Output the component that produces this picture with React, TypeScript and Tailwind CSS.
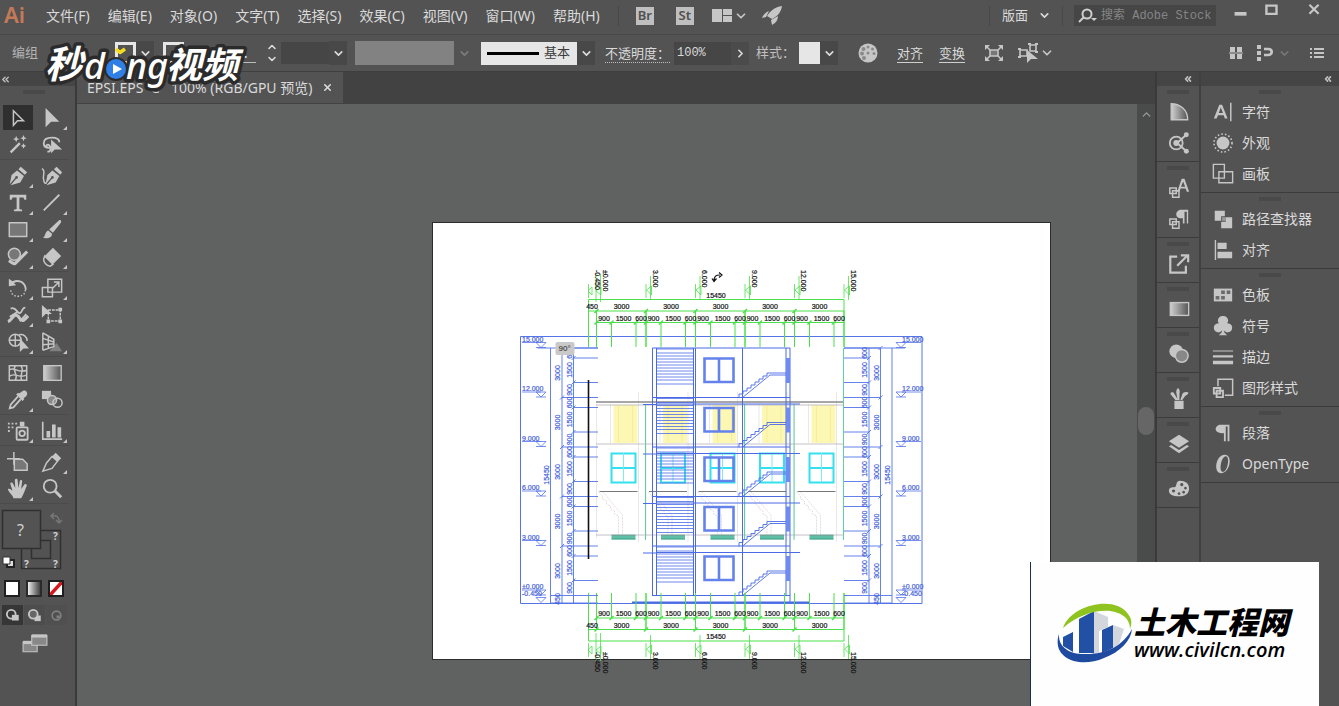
import { useState, type PropsWithChildren, type ReactNode } from "react";
import { ChevronDown, ChevronRight, ChevronUp, ChevronsLeft, X } from "lucide-react";

interface IconProps {
    size?: number,
}

const Icon = ({ size = 24, children }: PropsWithChildren<IconProps>) => (
    <svg width={size} height={size} viewBox="0 0 24 24" fill="currentColor" stroke="none" aria-hidden="true" className="shrink-0">
        {children}
    </svg>
);

const line = { fill: "none", stroke: "currentColor", strokeWidth: 1.6 } as const;

const menus = ["文件(F)", "编辑(E)", "对象(O)", "文字(T)", "选择(S)", "效果(C)", "视图(V)", "窗口(W)", "帮助(H)"];

interface Tool {
    name: string,
    icon: ReactNode,
    more?: boolean,
}

const toolGroups: Tool[][] = [
    [
        { name: "选择工具", icon: <path d="M7 4v16l4.500-5H18z" {...line} /> },
        { name: "直接选择工具", more: true, icon: <path d="M5 1v21l6-6h9z" /> },
        { name: "魔棒工具", icon: <><path d="M4 20L14 10" {...line} strokeWidth={2.6} /><path d="M10 2l1 2.500 2.500 1-2.500 1L10 9l-1-2.500-2.500-1 2.500-1zM18 1l1 2.500 2.500 1-2.500 1L18 8l-1-2.500-2.500-1 2.500-1zM18 10l1 2 2 1-2 1-1 2-1-2-2-1 2-1z" /></> },
        { name: "套索工具", icon: <><path d="M9 15c-4 0-6-2-6-5 0-4 4-6 9-6s8 2 8 5M7 19c3 1 4-2 3-5s-4-3-4-1 3 3 5 1" {...line} strokeWidth={2} /><path d="M11 6v15l4-4h8z" /></> },
    ],
    [
        { name: "钢笔工具", more: true, icon: <><path d="M15 2l7 6-2.500 2.500-7-6zM11 6l7.500 6-4 7L4 22l6-7a1.500 1.500 0 1 0-1-1L3 21l2-10z" /></> },
        { name: "曲率工具", icon: <><path d="M17 2l6 6-2 2.500-7-6zM12.500 6l7.500 6-4 7-10 3 6-7a1.500 1.500 0 1 0-1-1L5 21l2-10z" /><path d="M1 4c5 2 0 8 2 12 0 3 1 4 3 4" {...line} /></> },
        { name: "文字工具", more: true, icon: <path d="M3 3h18v5.500h-2L18 6h-4.500v12.500l3 .8V21h-9v-1.700l3-.8V6H6L5 8.500H3z" /> },
        { name: "直线段工具", more: true, icon: <path d="M3 20L20 3" {...line} strokeWidth={2} /> },
        { name: "矩形工具", more: true, icon: <path d="M2.500 4h19v15h-19z" {...line} fill="#777" /> },
        { name: "画笔工具", more: true, icon: <path d="M20 1c2.500 0 2.500 2 1 4l-8 10-4-3.500zM8 12.500l4 3.500c0 5-6 5.500-10 4.500 3-1 2-7 6-8z" /> },
        { name: "Shaper 工具", more: true, icon: <><circle cx="8" cy="9" r="6.500" {...line} fill="#777" /><path d="M2 16c4 2 4 4 7 3L22 6" {...line} strokeWidth={3.4} /></> },
        { name: "橡皮擦工具", more: true, icon: <><path d="M13 2l9 9-9 9-9-9z" /><path d="M4 11l9 9-3 2c-4 0-8-5-7-8z" {...line} /></> },
    ],
    [
        { name: "旋转工具", more: true, icon: <><path d="M2 2v8l8-1-2.500-2.500c6-3 12 1 12 7.500H21.500C21.500 6 14 1 6 4.500z" /><path d="M20 14c0 4-3 7-8 7s-8-3-8-8" {...line} strokeDasharray="1.600 2" /></> },
        { name: "比例缩放工具", more: true, icon: <><path d="M1.500 11.500h11v10h-11zM7.500 2.500h15v14h-15z" {...line} /><path d="M13 12l6-6m-5-.5h5.500V11" {...line} /></> },
        { name: "宽度工具", more: true, icon: <><path d="M1 19c4-1 5-6 8-7 5 0 4 6 8 6 2 0 4-3 6-5" {...line} strokeWidth={3.4} /><path d="M4 5c6-3 7 6 10 5s2-6 6-6M3 14l8-5M14 19l7-8" {...line} strokeWidth={2} /></> },
        { name: "自由变换工具", icon: <><path d="M8 6.500h13v12H8z" {...line} strokeDasharray="3 1" /><path d="M1 1v14l4-4h7zM19 4h4v4h-4zM19 17h4v4h-4zM6 17h4v4H6z" /></> },
        { name: "形状生成器工具", more: true, icon: <><circle cx="9" cy="10" r="6.500" {...line} /><path d="M13 4c5-1 9 2 9 7M2 10h13M9 4v13" {...line} /><path d="M14 8v15l4-4h6z" /></> },
        { name: "透视网格工具", more: true, icon: <><path d="M2 2v19M2 2l12 7v8L2 21M2 8l12 4M2 15l12-1M8 6v13" {...line} /><path d="M9 22l8-9 6 9z" opacity=".4" /></> },
    ],
    [
        { name: "网格工具", icon: <path d="M2.500 4h19v16h-19zM2 9c7-5 8 4 20 0M2 16c7-6 9 3 20-2M9 4c-4 7 4 8 0 16M15 4c5 5-2 8 1 16" {...line} /> },
        { name: "渐变工具", icon: <><rect x="3" y="4" width="19" height="16" fill="url(#fade)" stroke="currentColor" strokeWidth="1.500" /></> },
        { name: "吸管工具", more: true, icon: <><path d="M16 3c4-4 8 1 5 5l-3 2 1 1-2 2-7-7 2-2 1 1z" /><path d="M12 8L4 17l-1 4 4-1 8-9" {...line} strokeWidth={2} /></> },
        { name: "混合工具", icon: <><path d="M1 2h10v9H1z" /><circle cx="12" cy="12" r="5" {...line} fill="#888" /><circle cx="18" cy="15" r="5" {...line} /></> },
    ],
    [
        { name: "符号喷枪工具", more: true, icon: <><path d="M1 3h2v2H1zM5 3h2v2H5zM9 3h2v2H9zM1 7h2v2H1zM5 7h2v2H5zM1 11h2v2H1zM14 2h5v5h-5z" /><rect x="10.500" y="8" width="12" height="13.500" rx="1" {...line} strokeWidth={2} /><circle cx="16.500" cy="14.500" r="3" {...line} strokeWidth={2} /></> },
        { name: "柱形图工具", more: true, icon: <path d="M1 2h1.800v18H23v1.800H1zM6 12h4v7H6zM12 5h4v14h-4zM18 8h4v11h-4z" /> },
    ],
    [
        { name: "画板工具", icon: <><path d="M0 8.500h14M7.500 1v14" {...line} /><path d="M8 9h9l5 5v7H8z" {...line} fill="#777" /></> },
        { name: "切片工具", more: true, icon: <><path d="M12 6l6 5-6 8-10 3 4-9z" {...line} /><path d="M16 2l6 6-4 4-6-6z" /></> },
        { name: "抓手工具", more: true, icon: <path d="M7 22c-1-4-6-7-6-10 2-1 4 1 5 2L3.500 6c1-2 2.500-1 3 0l2.500 5-.5-9c1-2 3-1 3 0l1 9 1.500-8c1-1.500 3-.5 2.500 1L15.500 12 19 7c1.500-1 3 .2 2.500 1.500-2 5-3 9-6 13.500z" /> },
        { name: "缩放工具", icon: <><circle cx="10" cy="9" r="7" {...line} strokeWidth={2} /><path d="M15 14l7 7" {...line} strokeWidth={3.2} /></> },
    ],
];

interface Panel {
    name: string,
    icon: ReactNode,
}

const dockGroups: Panel[][] = [
    [
        { name: "颜色参考", icon: <path d="M3.500 3c9 0 18 6 18 17.500h-18z" fill="url(#fade)" stroke="currentColor" strokeWidth="1.500" /> },
        { name: "资源导出", icon: <><circle cx="9" cy="12" r="7" {...line} strokeWidth={2} /><path d="M10 12l10-9M10 12l10 9" {...line} strokeWidth={2} /><circle cx="9" cy="12" r="3.200" /><circle cx="20" cy="3" r="2.700" /><circle cx="20" cy="21" r="2.700" /></> },
    ],
    [
        { name: "字符样式", icon: <><path d="M10 16l5-14h3l5 14h-2.500l-1.200-3.500h-5.600L12.500 16zM14.200 10.500h4.500L16.500 5z" /><path d="M2 12h7v6H2zM5 15h7v7H5z" {...line} /></> },
        { name: "段落样式", icon: <><path d="M14 2h8v15h-1.500V4H18v13h-1.800v-6C11 12 9 9 9 7s2-5 5-5z" /><path d="M2 12h7v6H2zM5 15h7v7H5z" {...line} /></> },
    ],
    [{ name: "导出", icon: <><path d="M10 4H2.500v17.500h17V14" {...line} strokeWidth={2.4} /><path d="M10 14L21 3M14 2.500h8V10" {...line} strokeWidth={2.4} /></> }],
    [{ name: "渐变", icon: <rect x="2.500" y="5" width="20" height="14" fill="url(#fade)" stroke="currentColor" strokeWidth="1.500" /> }],
    [{ name: "透明度", icon: <><circle cx="9" cy="9" r="7.500" /><circle cx="15" cy="14" r="7" {...line} fill="#888" /></> }],
    [{ name: "画笔", icon: <path d="M7 14h10v9H7zM8 13L3 7c-1-2 1-3 3-2l5 8zM10.500 13L9 5c0-3 1-4 2-5 2 2 2 4 1.500 6v7zM13.500 13l2-6c1-3 5-3 7-2-1 3-3 3-4 4l-3 4z" /> }],
    [{ name: "图层", icon: <path d="M12 2l11 7-11 7L1 9zM3.500 13l8.500 5.500 8.500-5.500L23 14.500 12 22 1 14.500z" /> }],
    [{ name: "颜色", icon: <path fillRule="evenodd" d="M13 3c6 0 10 3 10 8.500S19 20 12 20 1 18 1 14s3-4 6-4 1-7 6-7zm2 2.500a1.700 1.700 0 1 0 .1 0zm4 4a1.500 1.500 0 1 0 .1 0zm-2 4.500a1.500 1.500 0 1 0 .1 0zm-5 1.500a1.500 1.500 0 1 0 .1 0zm-6-3a1.700 1.700 0 1 0 .1 0z" /> }],
];

const panelGroups: Panel[][] = [
    [
        { name: "字符", icon: <><path d="M2 19L8 4h3l6 15h-3l-1.200-3.500H6.500L5 19zM7.400 13h4.500L9.600 7z" /><path d="M20.500 2v20" {...line} /></> },
        { name: "外观", icon: <><circle cx="12" cy="12" r="7" /><circle cx="12" cy="12" r="9.800" {...line} strokeWidth={1.800} strokeDasharray="1.700 2.300" /></> },
        { name: "画板", icon: <path d="M1.500 1.500h12v15h-12zM7.500 9.500h15v12h-15z" fill="#535353" stroke="currentColor" strokeWidth="1.500" /> },
    ],
    [
        { name: "路径查找器", icon: <><path d="M3 3h11v6h-4v5H3zM15 10h7v12H10v-7h5z" /><path d="M11 10h4v4h-4z" opacity=".6" /></> },
        { name: "对齐", icon: <path d="M3 1h1.500v22H3zM6 4h10v7H6zM6 14h16v7H6z" /> },
    ],
    [
        { name: "色板", icon: <><path d="M2 5h20v14H2z" /><path d="M4 13h4v4H4zM10 13h4v4h-4zM10 7h4v4h-4zM16 7h4v4h-4z" fill="#6b6b6b" /></> },
        { name: "符号", icon: <path d="M12 1a5 5 0 0 1 4.500 8 5 5 0 1 1-3.500 8c0 2 1 3 3.500 5h-9c2.500-2 3.500-3 3.500-5A5 5 0 1 1 7.500 9 5 5 0 0 1 12 1z" /> },
        { name: "描边", icon: <path d="M1 5h22v1H1zM1 10h22v2.500H1zM1 16h22v4H1z" /> },
        { name: "图形样式", icon: <><path d="M14 20h8.500V2.500h-16V10" {...line} /><path d="M2 12h7v6H2zM5 15h7v7H5z" {...line} strokeWidth={2} /></> },
    ],
    [
        { name: "段落", icon: <path d="M9 3h10v18h-2V5h-2v16h-2v-9C7 13 4 10 4 8s2-5 5-5z" /> },
        { name: "OpenType", icon: <path fillRule="evenodd" d="M14 2c9 0 6 20-4 20C1 22 4 2 14 2zm1 1.500c-5 0-8 17-3 17s8-17 3-17z" /> },
    ],
];

const Grip = () => (
    <div className="flex h-[11px] items-center justify-center">
        <div className="h-[4px] w-[22px] bg-[#494949]" />
    </div>
);

const PanelBar = () => (
    <div className="flex h-[14px] items-center justify-end bg-[#454545] pr-[6px] text-[#bdbdbd]">
        <ChevronsLeft size={10} strokeWidth={4} />
    </div>
);

const Caret = ({ label, className = "w-[18px] bg-[#484848]" }: { label: string, className?: string }) => (
    <button type="button" aria-label={label} className={`${className} flex h-[24px] shrink-0 items-center justify-center text-[#dedede]`}>
        <ChevronDown size={13} strokeWidth={3} />
    </button>
);

const MenuBar = () => (
    <header className="flex h-[35px] items-center border-b border-[#484848] pb-[3px] text-[14px] whitespace-nowrap">
        <div className="w-[46px] shrink-0 pb-1 pl-1 text-[22px] leading-[30px] font-semibold text-[#c47a58]">Ai</div>
        <nav className="flex gap-[18px]">
            {menus.map((menu) => (
                <button key={menu} type="button">{menu}</button>
            ))}
        </nav>
        <div className="ml-[18px] h-5 w-px bg-[#484848]" />
        <button type="button" className="ml-[17px] flex h-[18px] w-[18px] items-center justify-center bg-[#bfbfbf] text-[13px] font-semibold text-[#505050]">Br</button>
        <button type="button" className="ml-[22px] flex h-[18px] w-[18px] items-center justify-center bg-[#bfbfbf] text-[13px] font-semibold text-[#505050]">St</button>
        <button type="button" aria-label="排列文档" className="ml-4 flex items-center text-[#c6c6c6]">
            <Icon><path d="M2 5h10v13H2zM13 5h9v6h-9zM13 12h9v6h-9z" /></Icon>
            <ChevronDown size={14} strokeWidth={3} />
        </button>
        <button type="button" aria-label="GPU 性能" className="ml-3 text-[#c6c6c6]">
            <Icon><path d="M22 2C15 3 10 7 7 12l5 3c6-3 9-7 10-13zM9 7c-3 1-6 4-7 7l4-1zM18 12c0 4-2 7-6 9l-1-5z" /></Icon>
        </button>
        <div className="ml-auto h-5 w-px bg-[#484848]" />
        <label className="ml-3 flex items-center">
            <select aria-label="工作区" className="w-[36px] appearance-none text-[13px]" defaultValue="版面">
                <option>版面</option>
            </select>
            <ChevronDown size={13} strokeWidth={3} />
        </label>
        <div className="mx-[11px] h-5 w-px bg-[#484848]" />
        <label className="flex h-[21px] w-[142px] items-center bg-[#464646] pl-1">
            <svg width="22" height="16" viewBox="0 0 22 16" fill="none" stroke="#cfcfcf" strokeWidth="2" aria-hidden="true">
                <circle cx="9" cy="6" r="4.500" />
                <path d="M6 9l-5 5" />
                <path d="M13 10h6l-3 3z" fill="#cfcfcf" stroke="none" />
            </svg>
            <input aria-label="搜索" placeholder="搜索 Adobe Stock" className="w-0 flex-1 pl-px font-['Liberation_Mono','Noto_Sans_CJK_SC',monospace] text-[12px] placeholder:text-[#858585]" />
        </label>
        <div className="flex h-[24px] items-center pb-2 text-[#c6c6c6]">
            <button type="button" aria-label="最小化" className="ml-[14px]"><Icon size={22}><path d="M5 12h13v4H5z" /></Icon></button>
            <button type="button" aria-label="最大化" className="ml-2"><Icon size={22}><path d="M7 5h11v9H7z" {...line} strokeWidth={2.6} /></Icon></button>
            <button type="button" aria-label="关闭" className="mr-[14px] ml-[21px]"><Icon size={22}><path d="M7 4l10 10M17 4L7 14" {...line} strokeWidth={2.4} /></Icon></button>
        </div>
    </header>
);

const ControlBar = () => (
    <div className="flex h-[37px] items-center border-b border-[#3f3f3f] text-[13px] whitespace-nowrap">
        <span className="ml-3 w-[103px] text-[#b4b4b4]">编组</span>
        <button type="button" aria-label="填色" className="h-[22px] w-[21px] border-[3px] border-[#e6e6e6]" />
        <Caret label="填色选项" />
        <button type="button" aria-label="描边颜色" className="ml-[9px] h-[22px] w-[21px] border-[3px] border-[#e6e6e6]" />
        <button type="button" aria-label="描边" className="ml-[58px] w-[14px] border-b border-[#bdbdbd]">：</button>
        <div className="ml-[6px] flex w-[19px] flex-col items-center text-[#e0e0e0]">
            <button type="button" aria-label="增加"><ChevronUp size={12} strokeWidth={3} /></button>
            <button type="button" aria-label="减少"><ChevronDown size={12} strokeWidth={3} /></button>
        </div>
        <input aria-label="描边粗细" className="h-[22px] w-[48px] bg-[#464646]" />
        <Caret label="粗细选项" />
        <input aria-label="变量宽度" className="ml-2 h-6 w-[99px] bg-[#828282]" />
        <Caret label="宽度选项" className="w-[20px] opacity-30" />
        <label className="ml-[7px] flex h-[23px] w-[96px] items-center bg-[#e6e6e6] pl-[6px] text-[#3c3c3c]">
            <span className="h-[3px] w-[52px] bg-black" />
            <select aria-label="画笔定义" className="ml-[5px] w-[32px] appearance-none" defaultValue="基本">
                <option>基本</option>
            </select>
        </label>
        <Caret label="画笔选项" />
        <label htmlFor="opacity" className="ml-[10px] w-[65px] border-b border-dotted border-[#bdbdbd] leading-[18px]">不透明度：</label>
        <input id="opacity" defaultValue="100%" className="ml-1 h-[23px] w-[57px] bg-[#464646] pl-[3px] font-['Liberation_Mono',monospace] text-[12px]" />
        <button type="button" aria-label="不透明度选项" className="flex h-[23px] w-[18px] items-center justify-center bg-[#4b4b4b]"><ChevronRight size={13} strokeWidth={3} /></button>
        <span className="ml-[7px] w-[39px] text-[#c0c0c0]">样式：</span>
        <button type="button" aria-label="样式" className="ml-[4px] h-[22px] w-[21px] bg-[#e6e6e6]" />
        <Caret label="样式选项" />
        <button type="button" aria-label="重新着色图稿" className="ml-[18px] text-[#c6c6c6]">
            <Icon>
                <circle cx="12" cy="12" r="9.500" />
                <g fill="#8a8a8a"><circle cx="12" cy="6" r="1.500" /><circle cx="16.500" cy="8" r="1.500" /><circle cx="18" cy="12.500" r="1.500" /><circle cx="7.500" cy="8" r="2" /><circle cx="6" cy="12.500" r="2" /><circle cx="8" cy="17" r="2" /><circle cx="12" cy="12" r="1.500" /></g>
            </Icon>
        </button>
        <button type="button" className="ml-[17px] border-b border-[#cfcfcf] leading-[18px]">对齐</button>
        <button type="button" className="ml-4 border-b border-[#cfcfcf] leading-[18px]">变换</button>
        <button type="button" aria-label="隔离选中的对象" className="ml-[17px] text-[#c6c6c6]">
            <Icon><path d="M8 9h8v6H8z" {...line} fill="#777" /><path d="M4 5l4 4M20 5l-4 4M4 19l4-4M20 19l-4-4" {...line} /><path d="M3 4h5L3 9zM21 4h-5l5 5zM3 20h5l-5-5zM21 20h-5l5-5z" /></Icon>
        </button>
        <button type="button" aria-label="选择类似的对象" className="ml-[10px] flex items-center text-[#c6c6c6]">
            <Icon><path d="M4 9h7v6H4zM14 4h6v6h-6z" {...line} /><path d="M11 9v13l4-4h7zM2 7h3v2H2zM2 15h3v2H2zM12 2h3v2h-3zM19 2h3v2h-3zM19 10h3v2h-3z" /></Icon>
            <ChevronDown size={14} strokeWidth={3} />
        </button>
        <div className="ml-auto flex items-center pr-[10px] text-[#c6c6c6]">
            <button type="button" aria-label="对齐像素网格"><Icon><path d="M6 6h5v5H6zM13 6h5v5h-5zM6 13h5v5H6zM13 13h5v5h-5zM5 11.500h14v1H5z" /></Icon></button>
            <button type="button" aria-label="对齐选项" className="ml-[6px] flex items-center">
                <Icon><path d="M3 4h4v4H3zM3 10h4v4H3zM3 16h4v4H3z" /><path d="M10 8h4c5 0 5 6 0 6h-4" {...line} strokeWidth={2.6} /></Icon>
                <ChevronDown size={13} strokeWidth={3} className="opacity-30" />
            </button>
            <button type="button" aria-label="面板菜单" className="ml-[14px]"><Icon><path d="M5 7h2v2H5zM9 7h10v2H9zM5 11h2v2H5zM9 11h10v2H9zM5 15h2v2H5zM9 15h10v2H9z" /></Icon></button>
        </div>
    </div>
);

const FillAndStroke = () => (
    <svg width="70" height="71" viewBox="0 504 70 71" fill="none" stroke="#303030" strokeWidth="1.500" className="font-['Noto_Sans',sans-serif]" aria-label="填色和描边">
        <path d="M21.500 530.500h39v38h-39zM31.500 540.500h19v18h-19z" />
        <path d="M2.500 510.500h38v38h-38z" fill="#535353" />
        <g fill="#cfcfcf" stroke="none">
            <text x="17" y="536" fontSize="16">?</text>
            <text x="53" y="540" fontSize="10" fontWeight="700">?</text>
            <text x="24" y="568" fontSize="10" fontWeight="700">?</text>
            <text x="53" y="568" fontSize="10" fontWeight="700">?</text>
        </g>
        <path d="M52 516c5-1 7 1 7 6M54 513l-3 3 3 3M56 520l3 3 3-3" stroke="#777" />
        <path d="M7 560h7v7H7z" fill="#ddd" stroke="#222" strokeWidth="2" />
        <path d="M3 557h7v7H3z" fill="#fff" stroke="#333" strokeWidth="1" />
    </svg>
);

const Toolbox = () => {
    const [active, setActive] = useState("选择工具");

    return (
        <aside className="w-[77px] shrink-0 border-r-2 border-[#3a3a3a]">
            <div className="flex h-[14px] items-center bg-[#454545] text-[#bdbdbd]"><ChevronsLeft size={11} strokeWidth={3} /></div>
            <div className="pr-2 pb-[5px]"><Grip /></div>
            {toolGroups.map((group) => (
                <div key={group[0].name} className="mr-[6px] grid grid-cols-2 border-b border-[#4b4b4b] pt-[2px] pb-px pl-px">
                    {group.map(({ name, icon, more }) => (
                        <button
                            key={name}
                            type="button"
                            aria-label={name}
                            onClick={() => setActive(name)}
                            className={`${active === name ? 'bg-[#2f2f2f]' : ''} relative mx-[2px] my-px flex h-[25px] items-center justify-center text-[#c6c6c6]`}
                        >
                            <Icon size={22}>{icon}</Icon>
                            {more && <span className="absolute right-0 bottom-0 text-[#c6c6c6]"><Icon size={4}><path d="M24 0v24H0z" /></Icon></span>}
                        </button>
                    ))}
                </div>
            ))}
            <FillAndStroke />
            <div className="flex h-[27px] items-center gap-[6px] pl-1">
                <button type="button" aria-label="颜色" className="h-[17px] w-4 border-2 border-[#1f1f1f] bg-white" />
                <button type="button" aria-label="渐变" className="h-[17px] w-4 border-2 border-[#2a2a2a] bg-linear-to-r from-[#f0f0f0] to-[#444]" />
                <button type="button" aria-label="无" className="h-[17px] w-4 border-2 border-[#1f1f1f] bg-white">
                    <svg viewBox="0 0 12 13" aria-hidden="true"><path d="M0 13L12 0" stroke="#d9151c" strokeWidth="3.500" /></svg>
                </button>
            </div>
            <div className="mt-[3px] flex h-[20px] gap-px pl-[2px] text-[#c6c6c6]">
                <button type="button" aria-label="正常绘图" className="flex w-[21px] items-center justify-center bg-[#363636]"><Icon size={15}><circle cx="10" cy="10" r="7" {...line} strokeWidth={3} /><path d="M11 11h11v9H11z" /></Icon></button>
                <button type="button" aria-label="背面绘图" className="flex w-[21px] items-center justify-center bg-[#4d4d4d]"><Icon size={15}><path d="M12 12h10v9H12z" /><circle cx="10" cy="10" r="7" fill="#666" stroke="currentColor" strokeWidth="3" /></Icon></button>
                <button type="button" aria-label="内部绘图" className="flex w-[21px] items-center justify-center bg-[#4d4d4d] opacity-40"><Icon size={13}><circle cx="12" cy="12" r="8" {...line} strokeWidth={3} /><path d="M12 12h6v5h-6z" /></Icon></button>
            </div>
            <button type="button" aria-label="更改屏幕模式" className="mt-[5px] flex w-[70px] justify-center text-[#c6c6c6]">
                <Icon size={26}><path d="M1 11h13v9H1z" fill="#888" stroke="currentColor" /><path d="M1 10h13v3H1z" /><path d="M9 5h14v9H9z" fill="#888" stroke="currentColor" /><path d="M9 4h14v3H9z" /></Icon>
            </button>
        </aside>
    );
};

// All drawing coordinates share one space: a bay and a storey are both 49.5 units.
const bays = [596.5, 646, 695.5, 745, 794.5];
const storeys = [348, 397.5, 447, 496.5, 546];
const louvers = [0, 4, 7, 10, 13, 16, 19, 22, 25, 28, 31, 35];
const levels = ["15.000", "12.000", "9.000", "6.000", "3.000", "±0.000"];
const flags = ["±0.000", "3.000", "6.000", "9.000", "12.000", "15.000"];

const HorizontalDims = ({ far, mid, near, edge }: { far: number, mid: number, near: number, edge: number }) => (
    <>
        <g stroke="#4be04b">
            <path d={`M588.500 ${far}H844M588.500 ${mid}H844M596.500 ${near}H844`} />
            <path d={`M588.500 ${far}V${edge}M844 ${far}V${edge}`} />
            {bays.map((x) => (
                <path key={x} d={`M${x} ${mid}V${edge}M${x + 15} ${near}V${edge}M${x + 39.500} ${near}V${edge}M${x + 49.500} ${mid}V${edge}`} />
            ))}
            {bays.map((x) => (
                <path key={x} strokeWidth="1.500" d={`M${x - 2} ${mid + 2}l4-4M${x - 2} ${near + 2}l4-4M${x + 13} ${near + 2}l4-4M${x + 37.500} ${near + 2}l4-4`} />
            ))}
        </g>
        <g fill="#111" stroke="#111" strokeWidth=".2" textAnchor="middle">
            <text x="716" y={far - 2}>15450</text>
            <text x="592" y={mid - 2}>450</text>
            {bays.map((x) => (
                <g key={x}>
                    <text x={x + 25} y={mid - 2}>3000</text>
                    <text x={x + 7.500} y={near - 2}>900</text>
                    <text x={x + 27} y={near - 2}>1500</text>
                    <text x={x + 44.500} y={near - 2}>600</text>
                </g>
            ))}
        </g>
    </>
);

const Flags = ({ y, textY }: { y: number, textY: number }) => (
    <>
        <g stroke="#4be04b" strokeWidth=".8" fill="none">
            <path d={`M588.500 ${y}v14M596 ${y - 10}v28M600.500 ${y - 10}v28M592 ${y + 3}l-4 4 4 4zM601 ${y + 3}l-5 4 5 4z`} />
            {bays.map((x) => (
                <path key={x} d={`M${x + 49.500} ${y}v14M${x + 54} ${y - 8}v24M${x + 55} ${y + 2}l-5 4 5 5z`} />
            ))}
        </g>
        <g fill="#111" stroke="#111" strokeWidth=".2">
            <text transform={`translate(595 ${textY}) rotate(90)`}>-0.450</text>
            {flags.map((flag, i) => (
                <text key={flag} transform={`translate(${i === 0 ? 603 : 603 + i * 49.5} ${textY}) rotate(90)`}>{flag}</text>
            ))}
        </g>
    </>
);

const VerticalDims = ({ outer, mid, near, tick, dir }: { outer: number, mid: number, near: number, tick: number, dir: number }) => {
    const label = (x: number, y: number, text: string) => (
        <text key={`${x}-${y}`} textAnchor="middle" transform={`translate(${x} ${y}) rotate(-90)`}>{text}</text>
    );

    return (
        <>
            <g stroke="#5474e8" strokeWidth=".9">
                <path d={`M${outer} 348V603M${mid} 348V603M${near} 348V603M${outer - dir * 13} 348H${tick}M${tick} 603H${outer}M${tick} 595.500H${outer}`} />
                {storeys.map((y) => (
                    <path key={y} d={`M${mid} ${y}H${tick}M${near} ${y + 10}H${tick}M${near} ${y + 34.500}H${tick}M${near - 2} ${y + 12}l4-4M${near - 2} ${y + 36.500}l4-4M${mid - 2} ${y + 2}l4-4`} />
                ))}
            </g>
            <g fill="#4460d8" stroke="#4460d8" strokeWidth=".2">
                {label(outer - 2, 475, "15450")}
                {storeys.map((y) => (
                    <g key={y}>
                        {label(mid - 2, y + 25, "3000")}
                        {label(near - 2, y + 5, "600")}
                        {label(near - 2, y + 22, "1500")}
                        {label(near - 2, y + 42, "900")}
                    </g>
                ))}
                {label(mid - 2, 599, "450")}
            </g>
        </>
    );
};

const LevelMarks = ({ x, tri }: { x: number, tri: number }) => (
    <>
        <g fill="#4460d8" stroke="#4460d8" strokeWidth=".2">
            {levels.map((level, i) => (
                <text key={level} x={x} y={341.500 + i * 49.500}>{level}</text>
            ))}
            <text x={x} y="596">-0.450</text>
        </g>
        <g stroke="#5474e8" strokeWidth=".8" fill="none">
            {levels.map((level, i) => (
                <path key={level} d={`M${x} ${342.500 + i * 49.500}h19M${tri - 5} ${342.500 + i * 49.500}h10l-5 5zM${tri - 5} ${347.500 + i * 49.500}h10`} />
            ))}
            <path d={`M${tri - 5} 597.500h10l-5 5z`} />
        </g>
    </>
);

const Elevation = () => (
    <>
        {bays.map((x) => (
            <g key={x}>
                <rect x={x + 17} y="405" width="24" height="38" fill="#fcf8b4" />
                <path d={`M${x + 22} 406v36M${x + 36} 406v36`} stroke="#f0e68c" strokeWidth=".6" />
                <path d={`M${x} 404v134M${x + 14} 404v39M${x + 42} 392v150`} stroke="#dedede" strokeWidth=".7" />
                <path d={`M${x + 15} 453.500h24v29h-24zM${x + 15} 468h24`} fill="none" stroke="#35e0ee" strokeWidth="2" />
                <path d={`M${x + 27} 453v29`} stroke="#7eeaf2" strokeWidth="1" />
                <path d={`M${x + 3} 491.500h38`} stroke="#555" strokeWidth=".8" />
                <path d={`M${x + 2} 492l4 4v3l4 2v3l4 2v3l4 2v3l4 2v22M${x + 6} 492l4 4 4 5 4 5 8 9v22`} fill="none" stroke="#d8cfd2" strokeWidth=".7" strokeDasharray="2 1" />
                <rect x={x + 15} y="534.500" width="24" height="5" fill="#5cbfa6" />
                <path d={`M${x + 15} 535.500h24M${x + 15} 539h24`} stroke="#2f9079" strokeWidth=".6" />
            </g>
        ))}
        <path d="M596 402H844" stroke="#8a8a8a" strokeWidth="1.300" />
        <path d="M596 405H844M596 444H844M596 535H844" stroke="#b5b0b5" strokeWidth=".8" />
        <path d="M645.500 404V540M744.500 404V540M794 404V540M843.500 348V540" stroke="#5fd0a0" strokeWidth="1" />
    </>
);

const Section = () => (
    <g fill="none" stroke="#4a6ae6">
        <path d="M652.500 348H790M652.500 348V595M656.500 348V595M693.500 348V595M695.500 348V595M742.500 348V595M786 348V595M790 348V603" />
        {storeys.map((y) => (
            <g key={y}>
                <path d={`M652 ${y + 49.500}H790`} />
                {y > 350 && <path d={`M643 ${y + 7}H656M656 ${y + 6.500}H800`} />}
                {louvers.map((dy) => <path key={dy} d={`M656 ${y + dy + 1}H693`} strokeWidth=".8" />)}
                <path d={`M704.500 ${y + 10.500}h29v23.500h-29zM719 ${y + 10.500}v23.500`} strokeWidth="2.600" stroke="#6482ec" />
                <path d={`M739 ${y + 50}v-4h4v-3h4v-3h4v-3h4v-3h4v-3h4v-3h4v-3h4H786M742 ${y + 50}L770 ${y + 27}H786`} strokeWidth=".9" />
                <path d={`M788 ${y + 10}v25`} strokeWidth="4" stroke="#6f8af0" />
            </g>
        ))}
        <path d="M632 602.500H810" strokeWidth="2.200" />
    </g>
);

const Artwork = () => (
    <svg
        viewBox="510 262 420 412"
        width="420"
        height="412"
        fontSize="7"
        className="absolute top-[158px] left-[433px] font-['Liberation_Sans_Narrow','Liberation_Sans',sans-serif]"
    >
        <Elevation />
        <Section />
        <path d="M520.500 336.500H922V603.500H520.500z" fill="none" stroke="#5474e8" />
        <HorizontalDims far={299.5} mid={311} near={322.5} edge={347} />
        <HorizontalDims far={641} mid={629.5} near={618} edge={593} />
        <Flags y={284} textY={270} />
        <Flags y={643} textY={652} />
        <VerticalDims outer={550.5} mid={562} near={573.5} tick={598} dir={1} />
        <VerticalDims outer={892} mid={880.5} near={869} tick={844} dir={-1} />
        <LevelMarks x={522} tri={541} />
        <LevelMarks x={902} tri={901} />
        <path d="M588.500 380V559" stroke="#111" strokeWidth="1.600" />
        <path d="M714 281c0-5 2-6 6-6M719 272.500l3 2.500-3 2.500M712 278.500l2 3 2.500-3" fill="none" stroke="#111" strokeWidth="1.200" />
        <rect x="555.500" y="342" width="19" height="13" rx="2" fill="#c9c9c9" />
        <text x="558.500" y="351" fontSize="8" fill="#222">90°</text>
    </svg>
);

const Workspace = () => (
    <main className="flex min-w-0 flex-1 flex-col">
        <div className="flex h-[32px] bg-[#424242]">
            <div className="flex h-[31px] w-[266px] items-center bg-[#535353] pl-[10px] text-[14px] whitespace-nowrap">
                <span className="w-[64px]">EPSI.EPS</span>
                <span className="w-[20px] text-[12px]">@</span>
                <span>100% (RGB/GPU 预览)</span>
                <button type="button" aria-label="关闭文档" className="ml-auto pr-[10px]"><X size={11} strokeWidth={3.5} /></button>
            </div>
        </div>
        <div className="flex flex-1">
            <div className="relative min-w-0 flex-1 overflow-hidden bg-[#606261]">
                <div className="absolute top-[118px] left-[355px] h-[438px] w-[619px] border border-[#2c2c2c] bg-white" />
                <Artwork />
            </div>
            <div className="flex w-[18px] flex-col items-center bg-[#4a4c4b] pt-1 text-[#9a9a9a]">
                <ChevronUp size={13} strokeWidth={2.5} />
                <div className="mt-[286px] h-[28px] w-4 rounded-full bg-[#666]" />
            </div>
        </div>
    </main>
);

const Dock = () => (
    <div className="flex shrink-0 border-l-2 border-[#3a3a3a]">
        <div className="w-[44px] border-r-2 border-[#404040]">
            <PanelBar />
            {dockGroups.map((group) => (
                <section key={group[0].name} className="border-b border-[#3c3c3c] pb-[2px]">
                    <Grip />
                    {group.map(({ name, icon }) => (
                        <button key={name} type="button" aria-label={name} className="flex h-[31px] w-full items-center justify-center pb-[2px] pl-[2px] text-[#c6c6c6]">
                            <Icon size={22}>{icon}</Icon>
                        </button>
                    ))}
                </section>
            ))}
        </div>
        <div className="w-[138px]">
            <PanelBar />
            {panelGroups.map((group) => (
                <section key={group[0].name} className="border-b border-[#3c3c3c] pb-[2px]">
                    <Grip />
                    {group.map(({ name, icon }) => (
                        <button key={name} type="button" className="flex h-[31px] w-full items-center gap-2 pb-[2px] pl-[11px] text-[14px] whitespace-nowrap">
                            <span className="text-[#c6c6c6]"><Icon size={22}>{icon}</Icon></span>
                            {name}
                        </button>
                    ))}
                </section>
            ))}
        </div>
    </div>
);

const VideoMark = () => (
    <svg
        width="220"
        height="68"
        viewBox="36 34 220 68"
        aria-label="秒dong视频"
        className="absolute top-[34px] left-[36px] font-['Noto_Sans','Noto_Sans_CJK_SC',sans-serif]"
        fill="#fff"
        stroke="#2b2b2b"
        strokeWidth="7"
        strokeLinejoin="round"
        paintOrder="stroke"
        fontStyle="italic"
        fontWeight="700"
    >
        <text x="45" y="78" fontSize="38">秒</text>
        <text x="84" y="79" fontSize="36" fontWeight="500">d</text>
        <text x="126" y="79" fontSize="36" fontWeight="500">ng</text>
        <text x="166" y="78" fontSize="36">视频</text>
        <circle cx="116" cy="69" r="10" fill="#2f7fe6" strokeWidth="4" />
        <path d="M113 64l9 5-9 5z" stroke="none" />
        <path d="M116 49l4 3.500 5-3.500" fill="none" stroke="#f5dc1e" strokeWidth="3.500" />
    </svg>
);

const SiteMark = () => (
    <a href="#civilcn" className="absolute right-5 bottom-0 flex h-[144px] w-[289px] items-center border-l border-[#1d2b4d] bg-[#fefefe] text-black">
        <svg width="78" height="64" viewBox="0 0 78 64" className="ml-[25px] shrink-0" aria-hidden="true">
            <path d="M23 17l15-8v42H23zM7 35l10-5v20l-10-6zM46 28l11-5v23l-11 5z" fill="#2150a5" />
            <path d="M38 9l14 6v10l-9 4v22h-5zM57 23l11 4-5 15-6 4z" fill="#d3d7dd" />
            <path d="M7 26C15 2 60-7 72 12c4 5 4 9 2 15 0-22-38-26-67-1z" fill="#8fc31f" />
            <path d="M3 32c-8 24 20 35 45 24 16-6 27-17 28-29-9 17-26 25-45 25C15 53 2 46 3 32z" fill="#1e4a9f" />
        </svg>
        <div className="whitespace-nowrap italic">
            <div className="text-[31px] leading-[32px] font-black">土木工程网</div>
            <div className="font-['Open_Sans',sans-serif] text-[20px] leading-[24px] font-semibold">www.civilcn.com</div>
        </div>
    </a>
);

const App = () => (
    <div className="relative flex min-h-screen flex-col overflow-hidden bg-[#535353] font-['Noto_Sans','Noto_Sans_CJK_SC',sans-serif] text-[#dadada]">
        <svg width="0" height="0" className="absolute" aria-hidden="true">
            <linearGradient id="fade">
                <stop offset="0" stopColor="#d0d0d0" />
                <stop offset="1" stopColor="#555" />
            </linearGradient>
        </svg>
        <MenuBar />
        <ControlBar />
        <div className="flex flex-1">
            <Toolbox />
            <Workspace />
            <Dock />
        </div>
        <VideoMark />
        <SiteMark />
    </div>
);

export default App;
